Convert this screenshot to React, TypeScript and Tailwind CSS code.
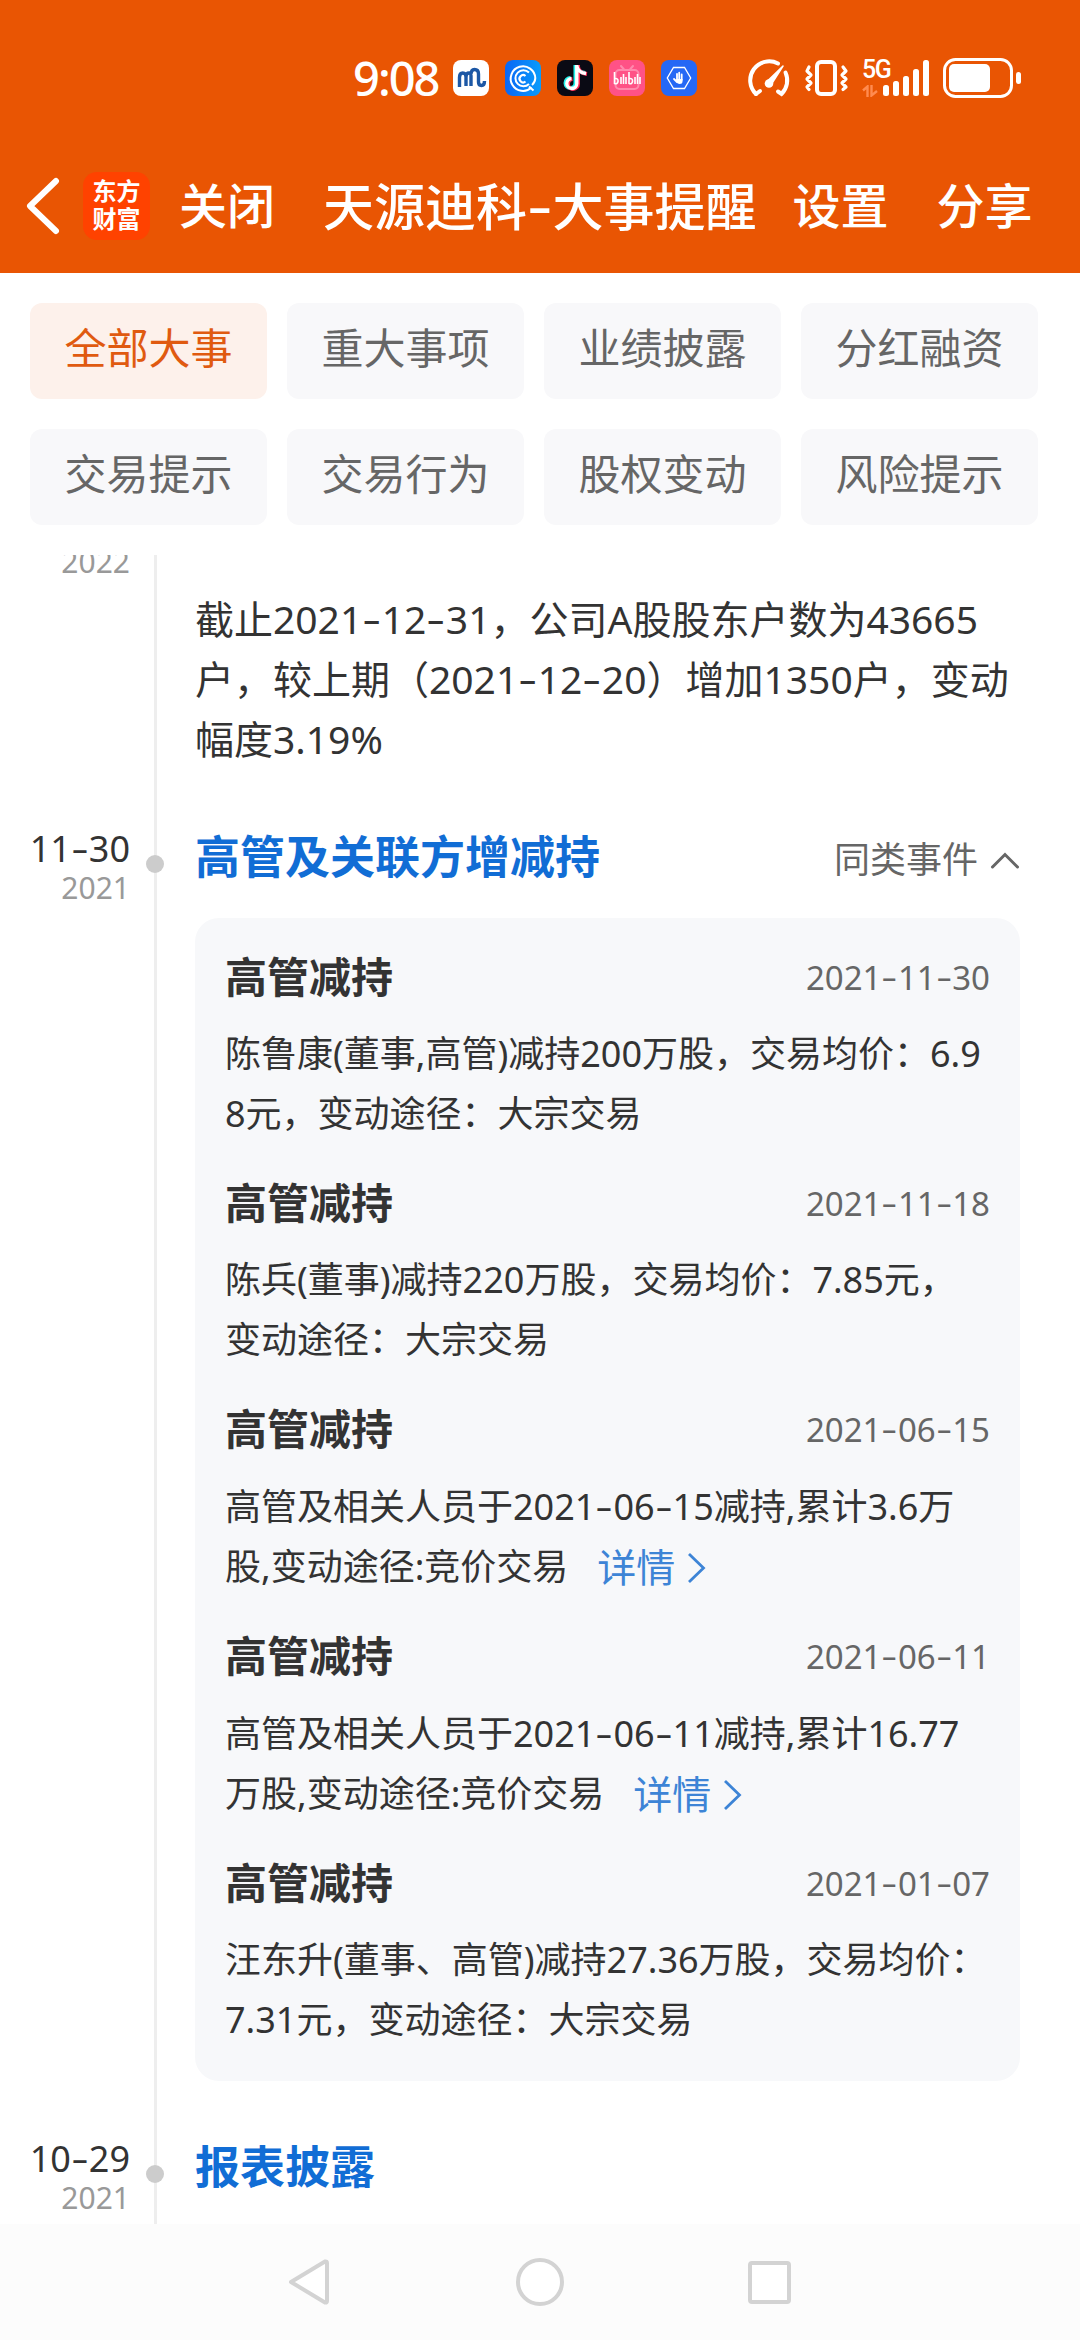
import { Fragment, useState } from "react";
import clsx from "clsx";

interface RelatedEvent {
  title: string;
  date: string;
  lines: string[];
  hasDetail?: boolean;
}

const TABS = [
  "全部大事",
  "重大事项",
  "业绩披露",
  "分红融资",
  "交易提示",
  "交易行为",
  "股权变动",
  "风险提示",
];

const HOLDER_LINES = [
  "截止2021-12-31，公司A股股东户数为43665",
  "户，较上期（2021-12-20）增加1350户，变动",
  "幅度3.19%",
];

const EVENTS: RelatedEvent[] = [
  {
    title: "高管减持",
    date: "2021-11-30",
    lines: ["陈鲁康(董事,高管)减持200万股，交易均价：6.9", "8元，变动途径：大宗交易"],
  },
  {
    title: "高管减持",
    date: "2021-11-18",
    lines: ["陈兵(董事)减持220万股，交易均价：7.85元，", "变动途径：大宗交易"],
  },
  {
    title: "高管减持",
    date: "2021-06-15",
    lines: ["高管及相关人员于2021-06-15减持,累计3.6万", "股,变动途径:竞价交易"],
    hasDetail: true,
  },
  {
    title: "高管减持",
    date: "2021-06-11",
    lines: ["高管及相关人员于2021-06-11减持,累计16.77", "万股,变动途径:竞价交易"],
    hasDetail: true,
  },
  {
    title: "高管减持",
    date: "2021-01-07",
    lines: ["汪东升(董事、高管)减持27.36万股，交易均价：", "7.31元，变动途径：大宗交易"],
  },
];

// hyphens are drawn wide and at mid-digit height
function Txt({ children }: { children: string }) {
  const parts = children.split("-");
  return (
    <>
      {parts.map((part, i) => (
        <Fragment key={i}>
          {i > 0 && (
            <span className="inline-block w-[0.5em] -translate-y-[0.03em] scale-x-150 text-center leading-none">
              -
            </span>
          )}
          {part}
        </Fragment>
      ))}
    </>
  );
}

function StatusBar() {
  return (
    <div className="flex h-[156px] items-start pt-[58px] pl-[353px] text-white">
      <div className="flex h-10 w-[100px] items-center text-[47px] font-medium leading-10 tracking-[-2px]">9:08</div>
      <div className="flex h-10 items-center gap-4">
        <svg className="size-9" viewBox="0 0 36 36">
          <rect width="36" height="36" rx="8" fill="#fff" />
          <path
            d="M6.500 27V17.500Q6.500 13 9.800 13Q13 13 13 17V26M13 17Q13 13 16 13Q18 13 18 15M18 26V15Q18 9.500 21.500 9.500Q25.500 9.500 25.500 14V22Q25.500 25.500 28.500 25.500Q31.500 25.500 31.500 21"
            fill="none"
            stroke="#1c57a5"
            strokeWidth="3.400"
          />
          <circle cx="20.500" cy="14.500" r="1" fill="#fff" />
        </svg>
        <svg className="size-9" viewBox="0 0 36 36">
          <defs>
            <linearGradient id="cq" x1="0" x2="1" y1="0" y2="0">
              <stop offset="0" stopColor="#0a66f5" />
              <stop offset="1" stopColor="#0a9cfb" />
            </linearGradient>
          </defs>
          <rect width="36" height="36" rx="8" fill="url(#cq)" />
          <g fill="none" stroke="#fff" strokeWidth="2">
            <path d="M26.500 27.500A12.300 12.300 0 1 1 30.300 18Q30.300 22 27 25" />
            <path d="M24 12.500A8 8 0 1 0 24 24" />
            <path d="M20.500 16A3.600 3.600 0 1 0 20.500 21.500" strokeWidth="2.200" />
            <path d="M24 26.500L28.500 30.500" />
          </g>
        </svg>
        <svg className="size-9" viewBox="0 0 36 36">
          <rect width="36" height="36" rx="8" fill="#0a0a14" />
          <g fill="none" strokeWidth="4">
            <path d="M18.500 5V23A5 5 0 1 1 13.500 18M18.500 6Q20 12 28 13" stroke="#25f4ee" />
            <path d="M21 5V24A5 5 0 1 1 15.500 19M21 7Q22 13 30 14" stroke="#fe2c55" />
            <path d="M19.800 5V23.500A5 5 0 1 1 14.500 18.500M19.800 6Q21 12.500 29 13.500" stroke="#fff" strokeWidth="3.400" />
          </g>
        </svg>
        <svg className="size-9" viewBox="0 0 36 36">
          <rect width="36" height="36" rx="8" fill="#ff5286" />
          <g fill="none" stroke="#ff89ad" strokeWidth="2" strokeLinecap="round">
            <rect x="6.500" y="10" width="23" height="19" rx="4" />
            <path d="M12 6L15 9.500M24 6L21 9.500" />
          </g>
          <g fill="none" stroke="#fff" strokeWidth="1.600">
            <path d="M5.500 12V24M5.500 18.500Q9.500 18 9 21.500Q8.500 24.500 5.500 23.500M12 17V24M14.500 14V24M17 17V24M20 12V24M20 18.500Q24 18 23.500 21.500Q23 24.500 20 23.500M26 17V24M28.500 14V24M31 17V24" />
          </g>
        </svg>
        <svg className="size-9" viewBox="0 0 36 36">
          <rect width="36" height="36" rx="8" fill="#2568f5" />
          <path d="M12.500 7.500H23.500L29.700 18L23.500 28.500H12.500L6.300 18Z" fill="none" stroke="#fff" strokeWidth="1.300" />
          <path d="M15.500 19H21.500V21.500Q21.500 24 18.500 24Q16.500 24 15.500 22Z" fill="#fff" />
          <path
            d="M16 22L13 19M16 20V14M18.200 20V12.700M20.700 20V14.500"
            fill="none"
            stroke="#fff"
            strokeWidth="1.800"
            strokeLinecap="round"
          />
        </svg>
      </div>
      <div className="ml-[50px] flex h-10 items-center">
        <svg className="h-10 w-[44px]" viewBox="0 0 44 40" fill="none" stroke="#fff" strokeLinecap="round">
          <path d="M9 36A19 19 0 0 1 31 5.500" strokeWidth="4" />
          <path d="M38.500 14.500A19 19 0 0 1 34.500 36L31 33.500" strokeWidth="4" />
          <path d="M9 36L13 33" strokeWidth="4" />
          <path d="M36 8L24.500 26L20 23.500Z" fill="#fff" strokeWidth="1.500" strokeLinejoin="round" />
          <circle cx="22" cy="25.500" r="4.300" fill="#fff" stroke="none" />
        </svg>
        <svg className="ml-3 h-10 w-[47px]" viewBox="0 0 47 40" fill="none" stroke="#fff" strokeLinecap="round" strokeLinejoin="round">
          <rect x="14" y="4" width="18" height="32" rx="4" strokeWidth="4" />
          <path d="M6 9L4 13L8 17L4 21L8 25L4 29L6 31.500M40 9L43 13L39 17L43 21L39 25L43 29L40 31.500" strokeWidth="3.200" />
        </svg>
        <div className="ml-3 flex h-10 w-[18px] flex-col pt-0.5">
          <span className="font-['Roboto'] text-[25px] font-medium leading-5 tracking-[-1.500px] whitespace-nowrap">5G</span>
          <svg className="mt-[5px] h-3 w-[17px]" viewBox="0 0 17 12" fill="none" stroke="#ff8b50" strokeWidth="2.400">
            <path d="M1 5.500L5.500 1.500V12M9.500 0V10.500L15 6" />
          </svg>
        </div>
        <svg className="ml-[3px] h-10 w-[47px]" viewBox="0 0 47 40" fill="#fff">
          <rect x="0" y="27" width="6" height="11" rx="2.500" />
          <rect x="10" y="23" width="6" height="15" rx="2.500" />
          <rect x="20" y="18" width="6" height="20" rx="2.500" />
          <rect x="30" y="11" width="6" height="27" rx="2.500" />
          <rect x="40" y="2" width="6" height="36" rx="2.500" />
        </svg>
        <svg className="ml-3 h-10 w-20" viewBox="0 0 80 40">
          <rect x="2.500" y="1.500" width="67" height="37" rx="11" fill="none" stroke="#fff" strokeWidth="3" />
          <rect x="7" y="6" width="41" height="28" rx="5" fill="#fff" />
          <rect x="74" y="14" width="5" height="12" rx="2.500" fill="#fff" />
        </svg>
      </div>
    </div>
  );
}

function TitleBar() {
  return (
    <div className="flex h-[100px] items-center whitespace-nowrap text-[48px] leading-none font-medium text-white">
      <svg className="ml-6 h-[60px] w-9" viewBox="0 0 36 60">
        <path d="M32 5L6 30L32 55" fill="none" stroke="#fff" strokeWidth="6" strokeLinecap="round" strokeLinejoin="round" />
      </svg>
      <div className="ml-[23px] flex h-[68px] w-[67px] flex-col items-center justify-center rounded-[14px] bg-[#ff4200] pb-0.5 text-2xl font-bold leading-[28px]">
        <span>东方</span>
        <span>财富</span>
      </div>
      <button className="ml-[29px]">关闭</button>
      <h1 className="ml-[48px] text-[51px]">
        <Txt>天源迪科-大事提醒</Txt>
      </h1>
      <button className="ml-[36px]">设置</button>
      <button className="ml-[48px]">分享</button>
    </div>
  );
}

function TimelineRow({
  date,
  year,
  children,
}: {
  date?: string;
  year: string;
  children: React.ReactNode;
}) {
  return (
    <div className="flex">
      <div className={clsx("w-[154px] shrink-0 pr-6 text-right", date ? "pt-7" : "-mt-[11px]")}>
        {date && (
          <div className="text-[36px] leading-[42px] text-[#333]">
            <Txt>{date}</Txt>
          </div>
        )}
        <div className="text-[30px] leading-9 text-[#999]">{year}</div>
      </div>
      <div className="relative w-[3px] shrink-0 bg-[#eee]">
        {date && <span className="absolute top-[55px] -left-2 size-[18px] rounded-full bg-[#ccc]" />}
      </div>
      <div className="w-[863px] pl-[38px]">{children}</div>
    </div>
  );
}

function EventItem({ event }: { event: RelatedEvent }) {
  const last = event.lines.length - 1;
  return (
    <div className={event.hasDetail ? "h-[227px]" : "h-[226px]"}>
      <div className="flex h-[60px] items-center justify-between">
        <h3 className="text-[42px] font-bold leading-[60px] text-[#333]">{event.title}</h3>
        <span className="pt-0.5 text-[33px] leading-[60px] text-[#666]">
          <Txt>{event.date}</Txt>
        </span>
      </div>
      <div className={clsx("text-[36px] text-[#333]", event.hasDetail ? "pt-[18px]" : "pt-[17px]")}>
        {event.lines.map((line, i) => (
          <div key={line} className="flex h-[60px] items-center whitespace-nowrap leading-[60px]">
            <span>
              <Txt>{line}</Txt>
            </span>
            {event.hasDetail && i === last && (
              <a className="ml-[29px] flex items-center text-[39px] text-[#3d84d6]">
                详情
                <svg className="ml-3 h-8 w-5" viewBox="0 0 20 32">
                  <path d="M2 3L16.500 17L2 31" fill="none" stroke="#3d84d6" strokeWidth="2.800" />
                </svg>
              </a>
            )}
          </div>
        ))}
      </div>
    </div>
  );
}

export default function App() {
  const [active, setActive] = useState(0);
  const [expanded, setExpanded] = useState(true);

  return (
    <div className="flex h-[2340px] w-[1080px] flex-col overflow-hidden bg-white font-['Noto_Sans','Noto_Sans_CJK_SC',sans-serif]">
      <header className="h-[273px] shrink-0 bg-[#e95503]">
        <StatusBar />
        <TitleBar />
      </header>

      <nav className="grid shrink-0 grid-cols-[repeat(4,237px)] gap-x-5 gap-y-[30px] p-[30px]">
        {TABS.map((tab, i) => (
          <button
            key={tab}
            onClick={() => setActive(i)}
            className={clsx(
              "h-24 rounded-xl pb-1.5 text-[42px] leading-none",
              i === active ? "bg-[#fdf1eb] text-[#e05a10]" : "bg-[#f8f8fa] text-[#666]"
            )}
          >
            {tab}
          </button>
        ))}
      </nav>

      <main className="min-h-0 flex-1 overflow-hidden">
        <TimelineRow year="2022">
          <div className="h-[245px] pt-[34px] text-[39px] leading-[60px] text-[#333]">
            {HOLDER_LINES.map((line) => (
              <p key={line} className="h-[60px] whitespace-nowrap">
                <Txt>{line}</Txt>
              </p>
            ))}
          </div>
        </TimelineRow>

        <TimelineRow date="11-30" year="2021">
          <div className="h-[1310px] pt-[27px]">
            <div className="flex h-[60px] items-center justify-between">
              <h2 className="text-[45px] font-bold leading-[60px] text-[#116dd5]">高管及关联方增减持</h2>
              <button
                onClick={() => setExpanded(!expanded)}
                className="flex items-center pt-1.5 text-[36px] text-[#666]"
              >
                同类事件
                <svg className="mt-0.5 ml-3 h-5 w-[30px]" viewBox="0 0 30 20">
                  <path d="M2.500 16L15 3.500L27.500 16" fill="none" stroke="#666" strokeWidth="3" strokeLinecap="round" />
                </svg>
              </button>
            </div>
            {expanded && (
              <div className="mt-[31px] h-[1163px] w-[825px] rounded-3xl bg-[#f7f8fa] px-[30px] pt-[29px]">
                {EVENTS.map((event) => (
                  <EventItem key={event.date} event={event} />
                ))}
              </div>
            )}
          </div>
        </TimelineRow>

        <TimelineRow date="10-29" year="2021">
          <div className="h-[130px] pt-[27px]">
            <h2 className="text-[45px] font-bold leading-[60px] text-[#116dd5]">报表披露</h2>
          </div>
        </TimelineRow>
      </main>

      <footer className="flex h-[116px] shrink-0 items-center bg-[#fcfcfc] pl-[288px]">
        <svg className="h-12 w-[42px]" viewBox="0 0 42 48">
          <path d="M3 24L37 3.500Q39 3 39 5V43Q39 45 37 44.500Z" fill="#fff" stroke="#d3d3d3" strokeWidth="4" strokeLinejoin="round" />
        </svg>
        <div className="ml-[186px] size-12 rounded-full border-4 border-[#d3d3d3] bg-white" />
        <div className="ml-[184px] size-[43px] rounded-[4px] border-4 border-[#d3d3d3] bg-white" />
      </footer>
    </div>
  );
}
